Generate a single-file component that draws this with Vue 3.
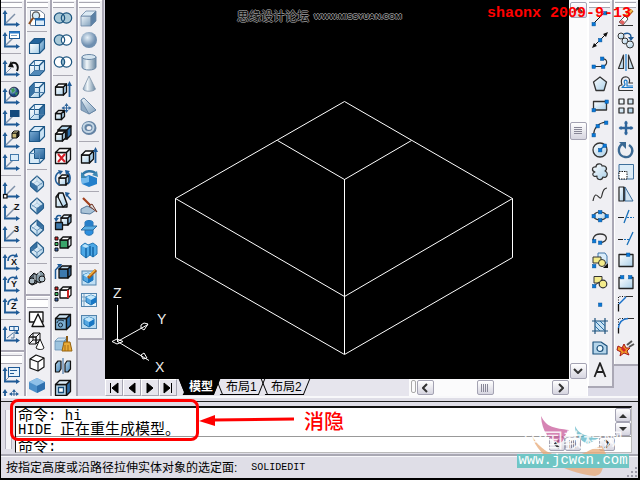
<script setup>
import { ref } from 'vue'

const command = ref('')
const activeTab = ref('模型')
const tabs = ['模型', '布局1', '布局2']

const B = '#1f5a96'
const K = '#111'
const path = (d, stroke = K, fill = 'none', w = 1) =>
  `<path d="${d}" stroke="${stroke}" fill="${fill}" stroke-width="${w}" stroke-linejoin="round"/>`
const dot = (x, y) => `<rect x="${x - 1.5}" y="${y - 1.5}" width="3.4" height="3.4" fill="#0878d8" stroke="#075096" stroke-width=".5"/>`
const letter = (c, x, y, s = 9) =>
  `<text x="${x}" y="${y}" font-family="Liberation Sans, sans-serif" font-weight="bold" font-size="${s}" fill="#111">${c}</text>`

const axes =
  path('M5 17V6M4 17.5H17', B, 'none', 1.8) +
  path('M5 3L2.5 7H7.5ZM20 17.5L16 15V20Z', 'none', B)
const ray = path('M6 16L15 7', '#7d8fa8', 'none', 1.4)
const ucs = axes + ray
const spin =
  axes + path('M8 10C8 5 12 3 16 5', B, 'none', 1.5) + path('M18 6L13.5 6.5L16.5 2Z', 'none', B)

// Box drawn as a front square with top and right faces; s is the edge, d the depth.
const box = (x, y, s, d, front, top, side, stroke = K, w = 1.3) =>
  path(`M${x} ${y + d}h${s}v${s}h${-s}Z`, stroke, front, w) +
  path(`M${x} ${y + d}l${d} ${-d}h${s}l${-d} ${d}Z`, stroke, top, w) +
  path(`M${x + s} ${y + d}l${d} ${-d}v${s}l${-d} ${d}Z`, stroke, side, w)
const L = 'url(#pale)'
const M = 'url(#mid)'
const cubeWire = path('M8.5 3.5V13.5H18.5M8.5 13.5L3.5 18.5', '#4c7da9')
const cubeView = (f, t, s, extra = '') => box(3.5, 3.5, 10, 5, f, t, s, '#1d5787', 1.1) + extra

const iso = (shade) =>
  path('M11 3L17.5 9V13L11 19L4.5 13V9Z', '#235b88', L, 1.1) +
  path('M11 3V8M4.5 13L11 8L17.5 13', '#9dbdd6', 'none', 0.7) +
  path(shade, '#235b88', '#3873a5', 0.8) +
  path('M4.5 9L11 13.5L17.5 9M11 13.5V19', '#4c7da9', 'none', 0.8)

const rings = (left, mid, right) =>
  `<circle cx="7.5" cy="11" r="5.2" fill="${left}"/><circle cx="14.5" cy="11" r="5.2" fill="${right}"/>` +
  path('M11 7.2A5.2 5.2 0 0 1 11 14.8A5.2 5.2 0 0 1 11 7.2Z', 'none', mid) +
  '<circle cx="7.5" cy="11" r="5.2" fill="none" stroke="#1d557f" stroke-width="1.2"/><circle cx="14.5" cy="11" r="5.2" fill="none" stroke="#1d557f" stroke-width="1.2"/>'

const hex = (x, y, r) =>
  path(`M${x} ${y - r}l${r} ${r * 0.4}v${r}l${-r} ${r * 0.6}l${-r} ${-r * 0.6}v${-r}Z`, '#2277b5', '#55a7e2') +
  path(`M${x} ${y}l${r} ${-r * 0.6}v${r}l${-r} ${r * 0.6}Z`, 'none', '#1877c5') +
  path(`M${x} ${y - r}l${r} ${r * 0.4}l${-r} ${r * 0.6}l${-r} ${-r * 0.6}Z`, 'none', '#c4e7fa')
const arrows4 = (x, y, r, w = 1) =>
  path(`M${x - r} ${y}H${x + r}M${x} ${y - r}V${y + r}`, '#2f659b', 'none', w) +
  path(
    `M${x} ${y - r - 1}l2 3h-4ZM${x} ${y + r + 1}l2 -3h-4ZM${x - r - 1} ${y}l3 2v-4ZM${x + r + 1} ${y}l-3 2v-4Z`,
    'none', '#2f659b', 1)
const cloud = 'M7 6C7 2 13 2 13 5C17 4 19 8 16 10C20 12 18 18 14 16C13 20 7 19 8 15C4 17 2 12 6 11C2 10 3 5 7 6Z'

const art = {
  ucs,
  ucsDialog: axes + ray + '<rect x="9.500" y="2.500" width="10" height="7" fill="#fff" stroke="#1f5a96"/><path d="M9 3.500h11" stroke="#2878c8" stroke-width="2"/><path d="M11 6.500h6" stroke="#7d9fc0"/>',
  ucsPrev: axes + path('M6 16L11 11', '#7d8fa8') + path('M17 14C19 9 17 5 12 6', K, 'none', 2) + path('M8 10L14 10.500L11 4Z', 'none', K),
  ucsWorld: ucs + '<circle cx="14" cy="7" r="4.800" fill="url(#ball)" stroke="#113" stroke-width=".8"/>' + path('M11 4L14 3L15 6L12 8ZM15 8L18 7L16 11Z', 'none', '#3d9a55'),
  ucsObject: ucs + '<rect x="10" y="3" width="9.500" height="7" fill="#15497c"/>',
  ucsFace: ucs + box(12, 2, 5, 2, '#c8b876', '#efe3a8', '#222', K, 1),
  ucsView: ucs + '<rect x="10.500" y="3.500" width="8" height="6" fill="#dcecf9" stroke="#4277a9"/>',
  ucsOrigin: ucs + '<rect x="3.500" y="15.500" width="3.500" height="3.500" fill="#fff" stroke="#111" stroke-width="1.200"/>',
  ucsZ: ucs + letter('Z', 14, 9),
  ucs3: ucs + letter('3', 14, 9),
  ucsRotX: spin + letter('X', 11, 14),
  ucsRotY: spin + letter('Y', 11, 14),
  ucsRotZ: spin + letter('Z', 11, 14),
  ucsApply: axes + path('M9.500 3.500h9v4h-9ZM14 3.500v4', B, '#e6f1fb') + path('M7 15L13 10M11 15h3V9h3', '#54789c') + path('M17 7l2 4h-4Z', 'none', B),
  ucsNamed: axes + '<rect x="8.500" y="3.500" width="11" height="9" fill="#e6f2fc" stroke="#1f5a96"/>' + path('M10 6.500h7M10 9.500h4', B) + path('M6 16L9 13', '#7d8fa8'),
  ucsMove: axes + arrows4(14, 8, 4),

  namedViews: path('M4.500 3.500H14L18.500 7V18.500H4.500Z', '#73849a', '#fff') + '<circle cx="10" cy="8.500" r="3.600" fill="#d2e9f8" stroke="#555" stroke-width="1.300"/>' + path('M7 11L3 17', '#8c4b1c', 'none', 2) + '<rect x="9.500" y="11.500" width="9" height="7" fill="#dcecf9" stroke="#1f5a96"/><path d="M9 12.500h10" stroke="#1c69b5" stroke-width="2"/>',
  top: cubeView(L, '#23649d', M),
  bottom: cubeView(L, '#e6f3fc', '#d7eaf8', path('M3.500 18.500L8.500 13.500H18.500L13.500 18.500Z', '#1d5787', '#5189b8') + cubeWire),
  left: cubeView(L, '#e6f3fc', '#d7eaf8', path('M3.500 8.500L8.500 3.500V13.500L3.500 18.500Z', '#1d5787', '#3873a5') + cubeWire),
  right: cubeView(L, '#e6f3fc', '#3873a5', cubeWire),
  front: cubeView('url(#deep)', '#d7eaf8', '#c9e2f4'),
  back: cubeView('#d7eaf8', '#e6f3fc', '#d7eaf8', path('M8.500 3.500H18.500V13.500H8.500Z', '#1d5787', 'url(#deep)') + path('M3.500 8.500H13.500V18.500', '#5b8bb5')),
  isoSW: iso('M4.5 9L11 13.5V19L4.5 13Z'),
  isoSE: iso('M11 13.5L17.5 9V13L11 19Z'),
  isoNE: iso('M11 3L17.5 9V13L11 8Z'),
  isoNW: iso('M4.5 9L11 3V8L4.5 13Z'),
  camera: path('M4 10L8 6L11 8V16L6 18L3 16Z', K, '#54616a') + path('M10 8L15 4L18 7V13L14 16L10 14Z', K, '#8498a3') + '<circle cx="6" cy="14" r="3" fill="#aab9c3" stroke="#111"/><circle cx="16" cy="12" r="3" fill="#b9c9d2" stroke="#111"/>' + path('M9 8V13M13 5V8', '#dfe9ee'),
  wire2d: path('M3.500 4H17V14H3.500Z', K, '#fff', 1.3) + path('M12 6L18 18.500H6Z', K, '#fff', 1.4),
  wire3d: box(3, 3, 7, 4, 'none', 'none', 'none', K, 1) + path('M7 3V10H14M7 10L3 14', K) + path('M14 9L10 18C12 20 17 20 18 18Z', K, '#fff'),
  hidden: path('M4 7L10 3L18 6V15L12 19L4 16Z', K, '#fff', 1.2) + path('M4 7L12 10L18 6M12 10V19', K, 'none', 1.1),
  flat: path('M3 8L11 4L19 8V15L11 19L3 15Z', 'none', '#4c8fc9') + path('M3 8L11 4L19 8L11 12Z', 'none', '#8fc0e8') + path('M11 12L19 8V15L11 19Z', 'none', '#2f70ae'),

  union: rings('#a9c9d8', '#a9c9d8', '#a9c9d8'),
  subtract: rings('#a9c9d8', '#fff', '#fff'),
  intersect: rings('#fff', '#8fb7cc', '#fff'),
  extrudeFace: box(3.5, 5, 8, 3, L, '#fff', '#aed1ea') + path('M17.500 18V6', B, 'none', 1.8) + path('M17.500 2L15 7H20Z', 'none', B),
  moveFace: box(3.5, 9.5, 6, 3, L, '#fff', '#aed1ea') + arrows4(14.5, 7, 4),
  offsetFace: box(6, 3, 9, 4, M, '#b8d9ef', '#2e6ea8') + box(3.5, 8, 7, 3, L, '#fff', '#aed1ea'),
  deleteFace: box(3.5, 3.5, 11, 4, '#fff', '#fff', '#dbe9f3') + path('M6 9L13 17M13 9L6 17', '#d5202a', 'none', 2),
  rotateFace: box(7, 8, 7, 3, L, '#fff', '#aed1ea') + path('M8 18C2 16 2 7 8 5M15 5C19 8 19 14 16 17', B, 'none', 1.6) + path('M6 3L11 4L8 8ZM13 3L18 4L14 8Z', 'none', B),
  taperFace: path('M4 18V8L7 4H11L15 15V18Z', K, L, 1.4) + path('M7 4L6 8L11 18L15 15M4 8H7', K, 'none', 1.2) + path('M19 11L14 5', B, 'none', 1.5) + path('M13 3L18 4L14 8Z', 'none', B),
  copyFace: box(9, 4, 7, 3, L, '#e6f3fc', M) + path('M3.500 11.500h7v7h-7Z', K, '#3e78aa', 1.3) + path('M4 9C4 4 7 4 9 5', B, 'none', 1.5) + path('M4 11L2 7H7Z', 'none', B),
  colorFace: box(8, 4, 8, 3, '#3aa56a', '#fff', '#dfe9ef') + '<path d="M3 4h3v3h-3Z" fill="#d22" stroke="#111"/><path d="M3 9.500h3v3h-3Z" fill="#3bbd60" stroke="#111"/><path d="M3 15h3v3h-3Z" fill="#36b" stroke="#111"/>',
  copyEdge: box(7, 5, 9, 3, '#3d79ad', '#c4def0', '#2d6397') + path('M3.500 18V9L8 4', B, 'none', 1.5) + path('M5 3H10L8 7Z', 'none', B),
  colorEdge: box(8, 4, 8, 3, '#fff', '#fff', '#fff') + path('M16 7V15', '#d22', 'none', 1.8) + '<path d="M3 4h3v3h-3Z" fill="#d22" stroke="#111"/><path d="M3 9.500h3v3h-3Z" fill="#3bbd60" stroke="#111"/><path d="M3 15h3v3h-3Z" fill="#36b" stroke="#111"/>',
  imprint: box(3.5, 3.5, 11, 4, '#7caed2', '#c9e1f2', '#2e6ea8') + '<circle cx="8.500" cy="14" r="2" fill="none" stroke="#123"/>' + path('M5 12C6 8 10 9 12 10', '#123'),
  clean: box(3, 5, 9, 3, '#9dc4df', '#d3e7f4', '#73a6cc', '#6a93b5', 0.8) + path('M15 3V10', '#8a5a18', 'none', 2) + path('M12 9H18L20 18H10Z', '#946211', '#e9ab35') + path('M13 12V18M16 12V18', '#a56b12'),
  separate: path('M3.500 9L6 6H9V14L7 17H3.500Z', K, M, 1.2) + path('M11 3V19', '#2f659b', 'none', 1) + path('M13 9L15 6H18.500V14L16 17H13Z', K, M, 1.2),
  shell: box(3.5, 3.5, 11, 4, '#b9d8ec', '#dcecf7', '#2e6ea8') + '<path d="M6.500 10.500h5v5h-5Z" fill="#fff" stroke="#174d79" stroke-width="1.300"/>',

  box: box(3, 4, 10, 5, 'url(#steel)', '#dceaf4', '#5c81a6', '#6987a5', 0.8),
  sphere: '<circle cx="11" cy="11" r="8" fill="url(#ball2)"/>',
  cylinder: path('M4 6V16C4 20 18 20 18 16V6Z', '#6987a5', 'url(#tube)') + '<ellipse cx="11" cy="6" rx="7" ry="2.500" fill="#d5e4ef" stroke="#6987a5"/>',
  cone: path('M11 3L5 16C6 19 16 19 17.500 16Z', '#7d93a8', 'url(#tube)', 0.8),
  wedge: path('M3 5V15L11 19L18 15L6 3Z', '#5f7f9f', '#8faac3', 0.8) + path('M3 5L11 19L18 15L6 3Z', '#5f7f9f', 'url(#steel)', 0.8),
  torus: '<ellipse cx="11" cy="11" rx="5" ry="4.500" fill="none" stroke="#6483a4" stroke-width="5"/><ellipse cx="10.500" cy="10.500" rx="5" ry="4.500" fill="none" stroke="#c3d5e4" stroke-width="2"/>',
  extrude: box(3.5, 6, 8, 4, L, '#fff', '#aed1ea') + path('M17.500 18V6', B, 'none', 1.8) + path('M17.500 2L15 7H20Z', 'none', B),
  revolve: path('M3 11L11 8L19 11V17L11 20L4 17Z', 'none', '#237fcb') + path('M3 11L11 9L11 15L4 17Z', 'none', '#73b9ec') + path('M4 9C6 3 15 3 18 7', '#2f76a8', 'none', 2.5) + path('M3 5V11H9ZM14 8L20 10L19 4Z', 'none', '#3d88b5'),
  slice: path('M3 14L9 11L18 15L12 19L3 18Z', '#55799c', '#aac3d7') + path('M5 3L14 12', '#a2401d', 'none', 2.2) + path('M11 11L14 9L19 17Z', '#6f3324', '#d6d6d6'),
  section: path('M7 5C8 3 14 3 15 5V16C14 19 8 19 7 16Z', '#2471b1', '#2c8fdf') + path('M3 13L7 9H19L15 13H3Z', '#2c6c9f', '#5aaee4') + path('M8 5C10 3 12 3 14 5V9H8Z', 'none', '#277fc9'),
  interfere: path('M3 7L7 4L10 6L15 4L19 7V15L15 18L12 16L8 19L3 15Z', '#2277b5', '#4ca7e5') + path('M8 8V19M12 7V16M15 8V18', '#1365a6', 'none', 1.5) + path('M4 7L7 5L11 7L8 9Z', 'none', '#bde3f8'),
  setupDrawing: '<rect x="4" y="4" width="14" height="14" fill="#c0dff4" stroke="#5283ac"/>' + hex(10, 11, 5) + path('M18 3L10 11', '#a65914', 'none', 3) + path('M17 3L11 9', '#f5b13c', 'none', 1.6),
  setupView: '<rect x="3.500" y="4.500" width="15" height="13" fill="#e5f2fa" stroke="#5283ac"/>' + path('M4 8H9M4 12H9M6 5V17', '#779fc0') + hex(13, 11, 5),
  setupProfile: '<rect x="3.500" y="4.500" width="15" height="13" fill="#b5d9f1" stroke="#5283ac"/>' + hex(11, 11, 5),

  line: path('M4 17L16 5') + dot(4.5, 17) + dot(16, 6),
  xline: path('M4 18L18 4') + path('M3 19L5 14L8 17ZM19 3L17 8L14 5Z', 'none', K) + dot(11, 11),
  pline: path('M4 15.500H14C19 14 19 7 13 8', '#333', 'none', 1.2) + dot(4.5, 15.5) + dot(14, 15.5) + dot(13, 7.5),
  polygon: path('M11 4L17.500 9L15 17.500H7L4.500 9Z', '#333', L, 1.3),
  rectangle: path('M4.500 6.500H17.500V15H4.500Z', '#333', L, 1.3) + dot(4.5, 15) + dot(17.500, 6.5),
  arc: path('M4.500 18C5 11 9 6 17 5', '#333', 'none', 1.2) + dot(4.5, 18) + dot(8.5, 9) + dot(17, 5.5),
  circle: '<circle cx="11" cy="11" r="7" fill="url(#pale)" stroke="#333" stroke-width="1.300"/>' + path('M11 11L16 6', '#1975c5', 'none', 1.3) + dot(11, 11) + dot(15.5, 6.5),
  cloud: path(cloud, '#333', L, 1.2),
  spline: path('M4 18C7 3 11 22 13 12C14 7 15 5 18 5', '#333', 'none', 1.2),
  ellipse: '<ellipse cx="11" cy="11" rx="6.500" ry="4" fill="url(#pale)" stroke="#333" stroke-width="1.200"/>' + dot(4.5, 11) + dot(17.5, 11) + dot(11, 7) + dot(11, 15),
  ellipseArc: path('M11 15.500C20 15 19 7 11 7C5 7 3 12 5 14', '#333', 'none', 1.3) + dot(5, 14) + dot(11, 15.5),
  insertBlock: path('M9 4H16L18 7V14H9Z', '#4277a9', '#d9ecfa') + path('M4 8H12V14H4Z', '#333', '#f4ec8c') + '<circle cx="13" cy="14" r="3.500" fill="#f4ec8c" stroke="#333"/>' + dot(5, 17) + path('M19 14V19H14Z', 'none', K),
  makeBlock: path('M5 5.500H13V12H5Z', '#333', '#f4ec8c') + '<circle cx="14" cy="13" r="3.800" fill="#f4ec8c" stroke="#333" stroke-width="1.200"/>' + path('M5 15L10 11', '#333') + dot(5, 15),
  point: dot(11, 11.5),
  hatch: '<rect x="6" y="6" width="10" height="10" fill="#c7e1f2"/>' + path('M6 3V19M16 3V19M3 6H19M3 16H19', '#1d527d', 'none', 1.2) + path('M7 7L15 15M11 6L16 11M6 11L11 16', '#2a6ea6'),
  region: path('M4 5H12L18 9V17H4Z', '#1d527d', '#b5d5ea', 1.2) + '<circle cx="11" cy="11.500" r="3" fill="#edf7fc" stroke="#1d527d" stroke-width="1.200"/>',
  text: path('M5.500 18L11 4L16.500 18M7.500 13H14.500', '#222', 'none', 1.8),

  erase: path('M3 18.500H18', '#333') + path('M17 3L10 11', '#a9641b', 'none', 4) + path('M17 3L11 9', '#f4bd4b', 'none', 2) + path('M10 9L13 12L8 18L4 15Z', '#555', '#fff') + path('M7 13L10 15L8 18L4 15Z', 'none', '#df605f'),
  copy: '<circle cx="6" cy="7" r="3" fill="url(#pale)" stroke="#333"/><circle cx="10" cy="12" r="3" fill="url(#pale)" stroke="#333"/><circle cx="15" cy="15.500" r="3.500" fill="url(#pale)" stroke="#333"/>' + path('M9 5C13 3 16 5 16 8', B, 'none', 1.5) + path('M13 8H19L16 12Z', 'none', B),
  mirror: path('M8.500 4V17.500H3.500Z', '#333', L, 1.2) + path('M11 3V20', '#1879c9', 'none', 1.2) + path('M13.500 4V17.500H18.500Z', '#333', L, 1.2),
  offset: path('M18 17.500H4C3 14 4 12 7 12C5 6 8 3 12 4C15 5 15 8 14 10H18', '#333', 'none', 1.2) + path('M18 14.500H7C8 13 10 13 10 11C8 8 10 6 12 8V13H18', '#1879c9', 'none', 1.2),
  array: path('M4 4h5v5h-5ZM13 4h5v5h-5ZM4 13h5v5h-5ZM13 13h5v5h-5Z', '#222', L, 1.2),
  move: arrows4(11, 11, 6.5, 2.4),
  rotate: path('M7 5C2 9 3 17 10 18C17 19 20 10 14 6', '#3b6993', 'none', 2.4) + path('M4 3H11V10Z', 'none', '#3b6993'),
  scale: path('M4 3.500H18.500V18H4Z', '#3d6f9c', '#dcecf8') + '<path d="M4 18V10.500H12V18Z" fill="#fff" stroke="#111" stroke-dasharray="1.500 1"/>',
  stretch: path('M4 4H9V18H4Z', '#222', L, 1.2) + path('M10 4V18H18L10 4', '#3d6f9c', '#d2e4f1') + path('M9 4V18', K, 'none', 1),
  trim: path('M3 12.500H9', '#222') + path('M9 18L14 5', '#1970b9', 'none', 1.3) + '<path d="M12 12.500H19" stroke="#1970b9" stroke-dasharray="2 1"/>',
  extend: '<path d="M3 12.500H14" stroke="#1970b9" stroke-dasharray="2 1"/>' + path('M3 12.500H8', '#222') + path('M12 18L18 5', '#1970b9', 'none', 1.3),
  breakPoint: path('M4 5.500H18V17.500H4Z', '#222', L, 1.3) + dot(13, 5.5),
  breakLine: path('M7 6.500H4V17.500H18V6.500H15', '#222', L, 1.3) + dot(7, 6) + dot(15, 6),
  chamfer: '<path d="M3.500 10V3.500H19" fill="none" stroke="#111" stroke-dasharray="1 1.500"/>' + path('M3.500 18.500V11', K, 'none', 1.3) + path('M4 11L11 4', '#1970c9', 'none', 1.5) + path('M11 3.500H18', '#333'),
  fillet: '<path d="M3.500 10V3.500H13" fill="none" stroke="#111" stroke-dasharray="1 1.500"/>' + path('M3.500 18.500V13', K, 'none', 1.3) + path('M3.500 13C4 7 8 4 13 3.500', '#1970c9', 'none', 1.5) + path('M13 3.500H19', '#333'),
  explode: path('M3 9L7 11L9 7L11 11L15 11L12 14L14 18L9 16L5 19L6 15L2 13Z', '#a51519', '#f09a25') + path('M12 8L17 4M14 10L19 7', '#555', 'none', 2) + path('M7 11L10 14', '#d8262b', 'none', 3)
}

const leftBars = [
  [
    { label: 'UCS', groups: [['ucs', 'ucsDialog'], ['ucsPrev'], ['ucsWorld', 'ucsObject', 'ucsFace', 'ucsView'], ['ucsOrigin', 'ucsZ', 'ucs3'], ['ucsRotX', 'ucsRotY', 'ucsRotZ'], ['ucsApply']] },
    { label: 'UCS II', groups: [['ucsNamed', 'ucsMove']] }
  ],
  [
    { label: '视图', groups: [['namedViews'], ['top', 'bottom', 'left', 'right', 'front', 'back'], ['isoSW', 'isoSE', 'isoNE', 'isoNW'], ['camera']] },
    { label: '着色', groups: [['wire2d', 'wire3d', 'hidden', 'flat']] }
  ],
  [
    { label: '实体编辑', groups: [['union', 'subtract', 'intersect'], ['extrudeFace', 'moveFace', 'offsetFace', 'deleteFace', 'rotateFace', 'taperFace', 'copyFace', 'colorFace'], ['copyEdge', 'colorEdge'], ['imprint', 'clean', 'separate', 'shell']] }
  ],
  [
    { label: '实体', groups: [['box', 'sphere', 'cylinder', 'cone', 'wedge', 'torus'], ['extrude', 'revolve'], ['slice', 'section', 'interfere'], ['setupDrawing', 'setupView', 'setupProfile']] }
  ]
]
const rightBars = [
  [{ label: '绘图', groups: [['line', 'xline', 'pline', 'polygon', 'rectangle', 'arc', 'circle', 'cloud', 'spline', 'ellipse', 'ellipseArc', 'insertBlock', 'makeBlock', 'point', 'hatch', 'region', 'text']] }],
  [{ label: '修改', groups: [['erase', 'copy', 'mirror', 'offset', 'array', 'move', 'rotate', 'scale', 'stretch', 'trim', 'extend', 'breakPoint', 'breakLine', 'chamfer', 'fillet', 'explode']] }]
]
const docks = [
  { side: 'left', columns: leftBars },
  { side: 'right', columns: rightBars }
]
const steps = [
  { label: '第一个', d: 'M3.500 2V12M11 2L5 7L11 12Z' },
  { label: '上一个', d: 'M10 2L4 7L10 12Z' },
  { label: '下一个', d: 'M4 2L10 7L4 12Z' },
  { label: '最后一个', d: 'M10.500 2V12M3 2L9 7L3 12Z' }
]
</script>

<template>
  <div class="app">
    <svg class="defs" width="0" height="0" aria-hidden="true">
      <defs>
        <linearGradient id="pale" x2="1" y2="1"><stop offset="0" stop-color="#fff" /><stop offset="1" stop-color="#a9cfe8" /></linearGradient>
        <linearGradient id="mid" x2="1" y2="1"><stop offset="0" stop-color="#b9d9ef" /><stop offset="1" stop-color="#4583b5" /></linearGradient>
        <linearGradient id="deep" x2="1" y2="1"><stop offset="0" stop-color="#7badd5" /><stop offset="1" stop-color="#245f96" /></linearGradient>
        <linearGradient id="steel" x2="1" y2="1"><stop offset="0" stop-color="#eef5fa" /><stop offset="1" stop-color="#7f9fbc" /></linearGradient>
        <linearGradient id="tube"><stop offset="0" stop-color="#8aa5be" /><stop offset=".35" stop-color="#f2f7fa" /><stop offset="1" stop-color="#66859f" /></linearGradient>
        <radialGradient id="ball" cx=".35" cy=".3"><stop offset="0" stop-color="#d7f1ff" /><stop offset="1" stop-color="#15457f" /></radialGradient>
        <radialGradient id="ball2" cx=".4" cy=".35"><stop offset="0" stop-color="#e5f0f8" /><stop offset="1" stop-color="#6f8fb0" /></radialGradient>
      </defs>
    </svg>

    <main class="workspace">
      <aside v-for="dock in docks" :key="dock.side" class="dock" :class="dock.side">
        <div v-for="(column, c) in dock.columns" :key="c" class="column">
          <div v-for="bar in column" :key="bar.label" class="toolbar" role="toolbar" :aria-label="bar.label">
            <div class="grip"></div>
            <div v-for="(group, g) in bar.groups" :key="g" class="group">
              <button v-for="name in group" :key="name" type="button" class="tool" :aria-label="name">
                <svg viewBox="0 0 22 22" width="22" height="22" fill="none" aria-hidden="true" v-html="art[name]"></svg>
              </button>
            </div>
          </div>
        </div>
      </aside>

      <section class="center">
        <div class="view-row">
          <div class="canvas">
            <svg class="model" viewBox="105 0 463 379" aria-label="模型">
              <g fill="none" stroke="#fff" stroke-width="1">
                <path d="M344.500 101.500L512.500 198.500V257.500L344.500 354.500L175.500 257.500V198.500Z" />
                <path d="M175.500 198.500L344.500 296.500L512.500 198.500M344.500 179V354M277.500 140.500L344.500 179.500L411.500 140.500" />
                <path d="M117.500 305V342M117.500 341.500L148 324.500M117.500 341.500L149 360.500M112 341.500L117 339L123 341.500L117 344Z" />
                <path d="M141 325l3 -2l4 1l-4 6l-3 -2ZM141 355l3 -2l3 5l-4 1Z" />
              </g>
              <g class="axis-name"><text x="113" y="298">Z</text><text x="157" y="324">Y</text><text x="155" y="372">X</text></g>
            </svg>
            <div class="forum"><span>思缘设计论坛</span><small>WWW.MISSYUAN.COM</small></div>
          </div>
          <div class="vscroll">
            <button type="button" class="sb" aria-label="向上"><svg width="10" height="6"><path d="M1 5L5 1L9 5" /></svg></button>
            <i class="space"></i>
            <button type="button" class="sb thumb-v" aria-label="垂直滚动"><svg width="8" height="8"><path class="fine" d="M0 .5H8M0 2.500H8M0 4.500H8M0 6.500H8" /></svg></button>
            <i class="space wide"></i>
            <button type="button" class="sb" aria-label="向下"><svg width="10" height="6"><path d="M1 1L5 5L9 1" /></svg></button>
          </div>
        </div>
        <div class="tab-row">
          <button v-for="s in steps" :key="s.label" type="button" class="step" :aria-label="s.label">
            <svg width="14" height="14"><path :d="s.d" /></svg>
          </button>
          <nav class="tabs">
            <button v-for="tab in tabs" :key="tab" type="button" class="tab" :class="{ active: tab === activeTab }" @click="activeTab = tab"><span>{{ tab }}</span></button>
          </nav>
          <div class="hscroll">
            <i class="split"></i>
            <button type="button" class="sb" aria-label="向左"><svg width="6" height="10"><path d="M5 1L1 5L5 9" /></svg></button>
            <i class="space"></i>
            <button type="button" class="sb" aria-label="水平滚动"><svg width="8" height="8"><path class="fine" d="M.5 0V8M2.500 0V8M4.500 0V8M6.500 0V8" /></svg></button>
            <i class="space later"></i>
            <button type="button" class="sb" aria-label="向右"><svg width="6" height="10"><path d="M1 1L5 5L1 9" /></svg></button>
          </div>
        </div>
      </section>
    </main>

    <section class="command">
      <div class="handle"></div>
      <div class="console">
        <div class="history">
          <div class="log">
            <p><span class="han">命令</span>: hi</p>
            <p>HIDE <span class="han">正在重生成模型。</span></p>
          </div>
          <div class="log-scroll">
            <button type="button" class="sb" aria-label="历史向上"><svg width="8" height="5"><path class="solid" d="M0 5L4 1L8 5Z" /></svg></button>
            <button type="button" class="sb" aria-label="历史向下"><svg width="8" height="5"><path class="solid" d="M0 0L4 4L8 0Z" /></svg></button>
          </div>
        </div>
        <div class="prompt">
          <label for="cmd"><span class="han">命令</span>:</label>
          <input id="cmd" v-model="command" type="text" autocomplete="off" />
          <div class="prompt-scroll">
            <button type="button" class="sb" aria-label="命令向左"><svg width="6" height="10"><path d="M5 1L1 5L5 9" /></svg></button>
            <button type="button" class="sb" aria-label="命令滚动"><svg width="8" height="8"><path class="fine" d="M.5 0V8M2.500 0V8M4.500 0V8M6.500 0V8" /></svg></button>
            <i class="space"></i>
            <button type="button" class="sb" aria-label="命令向右"><svg width="6" height="10"><path d="M1 1L5 5L1 9" /></svg></button>
          </div>
        </div>
      </div>
      <div class="callout">
        <div class="frame"></div>
        <svg class="arrow" width="96" height="14"><path d="M14 7L95 6" stroke="#f00" stroke-width="3" /><path d="M0 8L16 2V13Z" fill="#f00" /></svg>
        <strong>消隐</strong>
      </div>
      <div class="brand">
        <svg class="ribbons" width="120" height="64" aria-hidden="true">
          <path d="M30 2C36 14 44 14 58 16C52 22 54 28 48 29C38 26 31 18 30 2Z" fill="#c85b9b" opacity=".75" />
          <path d="M64 12C68 21 76 22 88 24L77 30C68 26 64 20 64 12Z" fill="#5ab3c4" opacity=".75" />
          <path d="M20 20C28 35 40 43 60 43C72 42 79 34 91 32L98 46C88 54 94 60 84 62C62 60 28 48 20 20Z" fill="#e7a875" opacity=".75" />
        </svg>
        <span class="brand-name">中国教程网</span>
        <span class="brand-url">www.jcwcn.com</span>
      </div>
    </section>

    <footer class="status">
      <span>按指定高度或沿路径拉伸实体对象的选定面:</span><span class="code">SOLIDEDIT</span>
      <svg class="size-grip" width="12" height="12"><path d="M9 1h2v2h-2ZM5 5h2v2h-2ZM9 5h2v2h-2ZM1 9h2v2h-2ZM5 9h2v2h-2ZM9 9h2v2h-2Z" /></svg>
    </footer>
    <div class="stamp">shaonx 2009-9-13</div>
  </div>
</template>

<style>
body { margin: 0; background: #000; }
</style>

<style scoped>
* { box-sizing: border-box; }
.app {
  position: relative;
  display: flex;
  flex-direction: column;
  height: 100vh;
  border: solid #000;
  border-width: 0 2px 2px 1px;
  background: #dfdee7;
  color: #000;
  font-family: "Liberation Sans", "Noto Sans CJK SC", sans-serif;
  overflow: hidden;
}
.defs { position: absolute; }
button { margin: 0; padding: 0; border: 0; background: none; font: inherit; color: inherit; }
svg { display: block; }
.workspace { flex: 1; min-height: 0; display: flex; border-bottom: 2px solid #f8f8fa; }
.dock { display: flex; overflow: hidden; flex: none; background: #dddce8; }
.dock.left { order: 0; width: 105px; margin-left: -1px; }
.center { order: 1; }
.dock.right { order: 2; border-left: 1px solid #fff; }
.column { width: 26px; flex: none; }
.right .column:last-child { width: 24px; }
.toolbar {
  padding-bottom: 5px;
  border-right: 2px solid #aaa8b5;
  border-bottom: 2px solid #aaa8b5;
  background: #efeff3;
  box-shadow: inset 1px 1px #fff;
}
.right .tool { margin-left: 1px; }
.right .column:last-child .toolbar { border-right: 0; }
.grip { height: 7px; padding: 2px 2px 0 1px; }
.grip::before { content: ""; display: block; height: 4px; border: solid #a9a8b2; border-width: 1px 0; background: #fff; }
.toolbar + .toolbar .grip { height: 12px; padding-top: 3px; }
.toolbar + .toolbar .grip::before { height: 7px; }
.group + .group { padding-top: 6px; background: linear-gradient(#aaa9b3, #aaa9b3) 1px 2px / 20px 1px no-repeat; }
.tool { display: block; width: 22px; height: 22px; }
.center { flex: 1; min-width: 0; display: flex; flex-direction: column; }
.view-row { flex: 1; min-height: 0; display: flex; }
.canvas { position: relative; flex: 1; min-width: 0; background: #000; }
.model { width: 100%; height: 100%; position: absolute; }
.axis-name { fill: #eee; font: 14px "Liberation Sans", sans-serif; }
.forum {
  position: absolute;
  top: 8px;
  left: 132px;
  display: flex;
  align-items: center;
  gap: 5px;
  line-height: 18px;
  font-size: 12px;
  color: #000;
  white-space: nowrap;
  text-shadow: 1px 0 #888, -1px 0 #888, 0 1px #888, 0 -1px #888;
}
.forum small { font-size: 8px; font-weight: bold; }
.vscroll { width: 19px; display: flex; flex-direction: column; align-items: center; padding-top: 2px; background: #fbfbfc; border-left: 1px solid #000; }
.sb {
  flex: none;
  display: grid;
  place-items: center;
  width: 17px;
  height: 16px;
  border: 1px solid #a4a3b3;
  border-radius: 2px;
  background: linear-gradient(#fff, #d6d5e0);
}
.sb path { fill: none; stroke: #333; stroke-width: 2; }
.sb .fine { stroke: #888797; stroke-width: 1; }
.sb .solid { fill: #333; stroke: none; }
.thumb-v { height: 18px; }
.space { flex: 103; }
.space.wide { flex: 222; }
.tab-row { display: flex; height: 17px; overflow: hidden; background: #e6e5ed; }
.step { width: 18px; display: grid; place-items: center; border: 1px solid #b5b4c1; border-color: #fff #a6a5b2 #a6a5b2 #fff; }
.step path { fill: #000; stroke: #000; stroke-width: 1; }
.tabs { display: flex; padding-left: 4px; }
.tab { position: relative; width: 45px; height: 15px; padding: 0 4px 0 8px; font-size: 12px; line-height: 14px; white-space: nowrap; text-align: left; }
.tab:first-child { width: 37px; }
.tab::before, .tab::after { content: ""; position: absolute; top: 0; height: 15px; width: 4px; border: 0 solid #000; }
.tab::before { left: 1px; border-left-width: 1px; border-bottom-width: 1px; transform: skewX(22deg); }
.tab::after { left: 5px; right: 1px; width: auto; border-right-width: 1px; border-bottom-width: 1px; transform: skewX(-22deg); }
.tab span { position: relative; z-index: 1; }
.tab.active { color: #fff; font-weight: bold; }
.tab.active::before { background: #000; width: 18px; }
.tab.active::after { background: #000; }
.hscroll { flex: none; width: 37%; margin-left: auto; padding: 1px 18px 0 2px; display: flex; background: #fbfbfc; }
.hscroll .space { flex: 43; }
.hscroll .space.later { flex: 58; }
.hscroll .sb { height: 15px; }
.split { width: 5px; height: 13px; margin-right: 1px; border: 1px solid #aaa; border-radius: 2px; }
.command { position: relative; display: flex; margin-top: 3px; padding: 4px 6px 1px 4px; border-top: 1px solid #222; border-bottom: 2px solid #a9a8b3; }
.handle { width: 7px; margin: 4px 3px 4px 0; border: solid #b1b0bd; border-width: 0 1px; background: #f5f5f8; }
.console { flex: 1; min-width: 0; border: solid #111; border-width: 2px 1px 1px; border-bottom-color: #bbb; border-right-color: #bbb; background: #fff; font: 14px "Liberation Mono", "Noto Sans CJK SC", monospace; }
.history { display: flex; height: 29px; border-bottom: 1px solid #999; }
.log { flex: 1; padding-left: 2px; }
.log p { margin: 0; height: 14px; line-height: 16px; white-space: pre; }
.han { font-size: 15px; line-height: 14px; }
.log-scroll .sb { height: 14px; width: 16px; }
.prompt { display: flex; height: 15px; padding-left: 2px; line-height: 20px; }
.prompt input { flex: 1; min-width: 0; padding: 0 4px; border: 0; outline: 0; background: none; font: inherit; }
.prompt-scroll { display: flex; width: 66px; margin-right: 16px; }
.prompt-scroll .sb { width: 16px; height: 14px; }
.callout { position: absolute; left: 9px; top: -3px; display: flex; align-items: center; height: 42px; color: #f00; pointer-events: none; }
.frame { width: 189px; height: 42px; border: 3px solid #f00; border-radius: 8px; }
.arrow { margin-right: 9px; }
.callout strong { padding-top: 4px; font-size: 20px; font-weight: 500; line-height: 24px; }
.brand { position: absolute; right: 9px; top: 12px; display: flex; flex-direction: column; width: 112px; height: 64px; z-index: 2; color: #fff; pointer-events: none; }
.ribbons { position: absolute; left: -6px; top: 0; }
.brand-name { position: relative; margin-top: 14px; font-size: 20px; line-height: 26px; white-space: nowrap; text-align: center; opacity: .85; }
.brand-url { position: relative; height: 14px; background: #70c6c5; font: 14px/12px "Liberation Mono", monospace; text-align: center; }
.status { position: relative; display: flex; align-items: center; height: 22px; padding-left: 5px; border-top: 1px solid #f8f8fb; font-size: 12px; line-height: 20px; white-space: nowrap; }
.code { margin-left: 14px; font: 10px "Liberation Mono", monospace; }
.size-grip { margin: auto 0 0 auto; fill: #9b9aa8; }
.stamp { position: absolute; right: 7px; top: 5px; color: #f00; font: bold 15px/18px "Liberation Mono", monospace; }
</style>
